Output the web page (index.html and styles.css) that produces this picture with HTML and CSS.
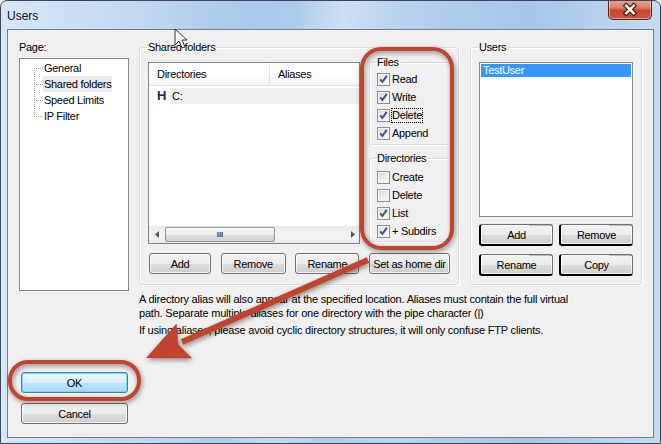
FILE: index.html
```html
<!DOCTYPE html>
<html lang="en">
<head>
    <meta charset="UTF-8">
    <title>Users</title>
    <link rel="stylesheet" href="styles.css">
</head>
<body>
<div class="window">
    <div class="titlebar">
        <span class="title">Users</span>
        <div class="close">
            <svg width="44" height="20" viewBox="0 0 44 20">
                <path d="M18 5.5 L26 13.5 M26 5.5 L18 13.5" stroke="#3b1d17" stroke-width="5" stroke-linecap="square"/>
                <path d="M18 5.5 L26 13.5 M26 5.5 L18 13.5" stroke="#fff" stroke-width="2.6" stroke-linecap="square"/>
            </svg>
        </div>
    </div>

    <div class="client">
        <div class="side">
            <div class="caption">Page:</div>
            <ul class="tree">
                <li><span>General</span></li>
                <li class="current"><span>Shared folders</span></li>
                <li><span>Speed Limits</span></li>
                <li><span>IP Filter</span></li>
            </ul>
            <button class="btn default ok">OK</button>
            <button class="btn cancel">Cancel</button>
        </div>

        <div class="content">
            <div class="groups">
                <fieldset class="group shared">
                    <legend>Shared folders</legend>
                    <div class="shared-top">
                        <div class="listview">
                            <div class="lv-head">
                                <div class="col col-dir">Directories</div>
                                <div class="col col-alias">Aliases</div>
                            </div>
                            <div class="lv-body">
                                <div class="lv-row">
                                    <span class="home">H</span>
                                    <span class="cell">C:</span>
                                </div>
                            </div>
                            <div class="hscroll">
                                <svg class="arrow" width="5" height="7" viewBox="0 0 5 7"><path d="M4 0 L0 3.5 L4 7 Z" fill="#555"/></svg>
                                <div class="track"><div class="thumb">III</div></div>
                                <svg class="arrow" width="5" height="7" viewBox="0 0 5 7"><path d="M1 0 L5 3.5 L1 7 Z" fill="#555"/></svg>
                            </div>
                        </div>

                        <div class="perms">
                            <fieldset class="group sub files">
                                <legend>Files</legend>
                                <label class="check"><span class="box on"></span>Read</label>
                                <label class="check"><span class="box on"></span>Write</label>
                                <label class="check"><span class="box on"></span><span class="focus">Delete</span></label>
                                <label class="check"><span class="box on"></span>Append</label>
                            </fieldset>
                            <fieldset class="group sub dirs">
                                <legend>Directories</legend>
                                <label class="check"><span class="box"></span>Create</label>
                                <label class="check"><span class="box"></span>Delete</label>
                                <label class="check"><span class="box on"></span>List</label>
                                <label class="check"><span class="box on"></span>+ Subdirs</label>
                            </fieldset>
                        </div>
                    </div>
                    <div class="row-buttons">
                        <button class="btn b-add">Add</button>
                        <button class="btn b-remove">Remove</button>
                        <button class="btn b-rename">Rename</button>
                        <button class="btn b-home">Set as home dir</button>
                    </div>
                </fieldset>

                <fieldset class="group users">
                    <legend>Users</legend>
                    <div class="listbox">
                        <div class="item selected">TestUser</div>
                    </div>
                    <div class="user-buttons">
                        <button class="btn glitch">Add</button>
                        <button class="btn glitch">Remove</button>
                        <button class="btn glitch">Rename</button>
                        <button class="btn glitch">Copy</button>
                    </div>
                </fieldset>
            </div>

            <div class="notes">
                <p>A directory alias will also appear at the specified location. Aliases must contain the full virtual path. Separate multiple aliases for one directory with the pipe character (|)</p>
                <p>If using aliases, please avoid cyclic directory structures, it will only confuse FTP clients.</p>
            </div>
        </div>
    </div>

    <!-- screenshot markup drawn over the dialog -->
    <svg class="marks" width="661" height="444" viewBox="0 0 661 444">
        <defs>
            <filter id="shade" x="-20%" y="-20%" width="140%" height="140%">
                <feGaussianBlur in="SourceAlpha" stdDeviation="2.5"/>
                <feOffset dx="1" dy="2" result="b"/>
                <feComponentTransfer><feFuncA type="linear" slope="0.45"/></feComponentTransfer>
                <feMerge><feMergeNode/><feMergeNode in="SourceGraphic"/></feMerge>
            </filter>
        </defs>
        <g filter="url(#shade)" fill="none" stroke="#c1452d" stroke-width="4">
            <rect x="362" y="49" width="90" height="199" rx="19"/>
            <rect x="10" y="362" width="129" height="37" rx="18"/>
        </g>
        <g filter="url(#shade)">
            <path d="M368 260 L182 342" stroke="#c1452d" stroke-width="6"/>
            <path d="M146 358 L176.6 323.6 L178 344 L192 358.2 Z" fill="#c1452d"/>
        </g>
        <path class="pointer" d="M175 29 L175 45 L179 41 L182 48 L185 47 L182 40 L187 40 Z" fill="#fff" stroke="#333" stroke-width="1"/>
    </svg>
</div>
</body>
</html>
```

FILE: styles.css
```css
body {
    margin: 0;
    font-family: "Liberation Sans", Arial, sans-serif;
    font-size: 11px;
    letter-spacing: -0.3px;
    color: #000;
    background: #fff;
}

.window {
    position: relative;
    width: 661px;
    height: 444px;
    box-sizing: border-box;
    border: 1px solid #3c4757;
    border-radius: 7px 7px 0 0;
    background:
        linear-gradient(100deg, rgba(255,255,255,0) 40%, rgba(255,255,255,.35) 47%, rgba(255,255,255,0) 54%),
        linear-gradient(90deg, #d6e7f8 0%, #c2d9f1 20%, #a9c8ea 38%, #b8d3ef 60%, #a6c5e8 80%, #c4dbf2 100%);
    display: flex;
    flex-direction: column;
    overflow: hidden;
}

.titlebar {
    height: 28px;
    display: flex;
    align-items: flex-start;
    justify-content: space-between;
    flex-shrink: 0;
}

.title {
    margin: 8px 0 0 6px;
    font-size: 12px;
    letter-spacing: 0;
    color: #111;
}

.close {
    width: 42px;
    height: 19px;
    margin-right: 8px;
    margin-top: -1px;
    border: 1px solid #5b2b22;
    border-top: none;
    border-radius: 0 0 5px 5px;
    background: linear-gradient(#e9a897 0%, #dd7f66 40%, #c8452b 55%, #cf5a3a 100%);
    box-shadow: inset 0 0 0 1px rgba(255,255,255,.35);
    display: flex;
}

.client {
    flex: 1;
    margin: 0 6px 5px 6px;
    border: 1px solid #6f7f93;
    background: #f0f0f0;
    display: flex;
    padding: 11px 11px 0 11px;
    gap: 10px;
}

/* left column */
.side {
    width: 110px;
    display: flex;
    flex-direction: column;
}

.caption {
    line-height: 13px;
    margin-bottom: 4px;
}

.tree {
    list-style: none;
    margin: 0;
    padding: 1px 0 0 14px;
    height: 233px;
    box-sizing: border-box;
    background: #fff;
    border: 1px solid #828790;
}

.tree li {
    display: flex;
    height: 16px;
    align-items: stretch;
}

.tree li::before {
    content: '';
    width: 9px;
    flex-shrink: 0;
    background:
        repeating-linear-gradient(90deg, #a0a0a0 0 1px, transparent 1px 2px) left 8px / 100% 1px no-repeat,
        repeating-linear-gradient(180deg, #a0a0a0 0 1px, transparent 1px 2px) left top / 1px 100% no-repeat;
}

.tree li:first-child::before {
    background:
        repeating-linear-gradient(90deg, #a0a0a0 0 1px, transparent 1px 2px) left 8px / 100% 1px no-repeat,
        repeating-linear-gradient(180deg, #a0a0a0 0 1px, transparent 1px 2px) left bottom / 1px 8px no-repeat;
}

.tree li:last-child::before {
    background:
        repeating-linear-gradient(90deg, #a0a0a0 0 1px, transparent 1px 2px) left 8px / 100% 1px no-repeat,
        repeating-linear-gradient(180deg, #a0a0a0 0 1px, transparent 1px 2px) left top / 1px 9px no-repeat;
}

.tree span {
    padding: 0 1px;
    line-height: 16px;
}

.tree .current span {
    background: #ececec;
}

/* buttons */
.btn {
    height: 21px;
    padding: 0;
    font-family: inherit;
    font-size: 11px;
    letter-spacing: -0.3px;
    color: #000;
    border: 1px solid #707070;
    border-radius: 3px;
    background: linear-gradient(#f2f2f2 0%, #ebebeb 50%, #dddddd 51%, #cfcfcf 100%);
    box-shadow: inset 0 0 0 1px rgba(255,255,255,.75);
}

.btn.default {
    border-color: #3c7fb1;
    background: linear-gradient(#eaf6fd 0%, #d9f0fc 50%, #bee6fd 51%, #a7d9f5 100%);
    box-shadow: inset 0 0 0 1px #7fd4f6;
}

.ok {
    width: 107px;
    margin: 81px 0 0 2px;
}

.cancel {
    width: 107px;
    margin: 10px 0 0 2px;
}

/* right column */
.content {
    display: flex;
    flex-direction: column;
}

.groups {
    display: flex;
    gap: 11px;
}

.group {
    margin: 0;
    min-width: 0;
    border: 1px solid #d5dfe5;
    border-radius: 3px;
    box-shadow: inset 1px 1px 0 #fff, 1px 1px 0 #fff;
}

.group legend {
    padding: 0 1px;
    margin-left: -1px;
    line-height: 13px;
}

.shared {
    width: 320px;
    box-sizing: border-box;
    padding: 8px 7px 8px 8px;
}

.shared-top {
    display: flex;
    gap: 9px;
}

.listview {
    width: 212px;
    height: 182px;
    box-sizing: border-box;
    border: 1px solid #828790;
    background: #fff;
    display: flex;
    flex-direction: column;
}

.lv-head {
    display: flex;
    height: 23px;
    background: linear-gradient(#fff 0%, #fff 50%, #f5f6f7 100%);
    border-bottom: 1px solid #e5e5e5;
    box-sizing: border-box;
}

.col {
    line-height: 23px;
    padding-left: 8px;
}

.col-dir {
    width: 112px;
    border-right: 1px solid #e5e5e5;
}

.col-alias {
    flex: 1;
}

.lv-body {
    flex: 1;
    padding-top: 2px;
}

.lv-row {
    display: flex;
    height: 16px;
    align-items: stretch;
}

.home {
    width: 13px;
    padding-left: 8px;
    font-weight: bold;
    font-size: 13px;
    line-height: 16px;
    color: #1b2f4a;
}

.cell {
    flex: 1;
    background: #efefef;
    padding-left: 2px;
    line-height: 16px;
}

.hscroll {
    height: 17px;
    display: flex;
    align-items: center;
    background: linear-gradient(#e8e8e8, #f3f3f3 40%, #f3f3f3 70%, #e8e8e8);
    padding: 0 4px 0 6px;
    gap: 5px;
}

.track {
    flex: 1;
    height: 15px;
}

.thumb {
    width: 110px;
    height: 15px;
    box-sizing: border-box;
    border: 1px solid #979797;
    border-radius: 2px;
    background: linear-gradient(#f6f6f6 0%, #ececec 50%, #dcdcdc 51%, #d4d4d4 100%);
    font-size: 8px;
    font-weight: bold;
    line-height: 13px;
    letter-spacing: 0;
    text-align: center;
    color: #444;
}

.perms {
    width: 82px;
    margin-top: -6px;
    display: flex;
    flex-direction: column;
    gap: 7px;
}

.sub {
    padding: 1px 4px 2px 7px;
}

.sub.dirs {
    padding-top: 3px;
    padding-bottom: 1px;
}

.check {
    display: flex;
    align-items: center;
    height: 18px;
    gap: 2px;
}

.box {
    width: 13px;
    height: 13px;
    box-sizing: border-box;
    border: 1px solid #8e8f8f;
    background: linear-gradient(135deg, #d2d5da 0%, #eef0f2 60%, #fcfcfc 100%);
    box-shadow: inset 0 0 0 1px #f4f4f4;
    flex-shrink: 0;
}

.box.on {
    background:
        url("data:image/svg+xml,%3Csvg xmlns='http://www.w3.org/2000/svg' width='11' height='11' viewBox='0 0 11 11'%3E%3Cpath d='M2.2 5.3 L4.4 7.8 L8.8 1.8' fill='none' stroke='%233d5796' stroke-width='2'/%3E%3C/svg%3E") center / 11px 11px no-repeat,
        linear-gradient(135deg, #d2d5da 0%, #eef0f2 60%, #fcfcfc 100%);
}

.focus {
    outline: 1px dotted #000;
    outline-offset: 0;
    line-height: 13px;
}

.row-buttons {
    display: flex;
    justify-content: space-between;
    margin-top: 9px;
    padding: 0 1px;
}

.b-add { width: 62px; }
.b-remove { width: 65px; }
.b-rename { width: 64px; }
.b-home { width: 81px; }

.users {
    width: 172px;
    box-sizing: border-box;
    padding: 8px 8px 8px 8px;
}

.listbox {
    height: 155px;
    box-sizing: border-box;
    border: 1px solid #828790;
    background: #fff;
    padding: 1px;
}

.item {
    line-height: 13px;
    padding-left: 2px;
}

.item.selected {
    background: #3399ff;
    color: #fff;
}

.user-buttons {
    margin-top: 7px;
    display: grid;
    grid-template-columns: 74px 74px;
    gap: 8px 6px;
}

.user-buttons .btn {
    height: 22px;
}

.btn.glitch {
    border-left: 2px solid #000;
    border-bottom: 2px solid #000;
    background:
        linear-gradient(90deg, transparent 68%, #000 68%) top / 100% 1px no-repeat,
        linear-gradient(#f2f2f2 0%, #ebebeb 50%, #dddddd 51%, #cfcfcf 100%);
}

.notes {
    margin-top: 7px;
    width: 440px;
    letter-spacing: -0.2px;
}

.notes p {
    margin: 0 0 3px 0;
    line-height: 14px;
}

/* markup layer */
.marks {
    position: absolute;
    left: -1px;
    top: -1px;
    pointer-events: none;
}
```
